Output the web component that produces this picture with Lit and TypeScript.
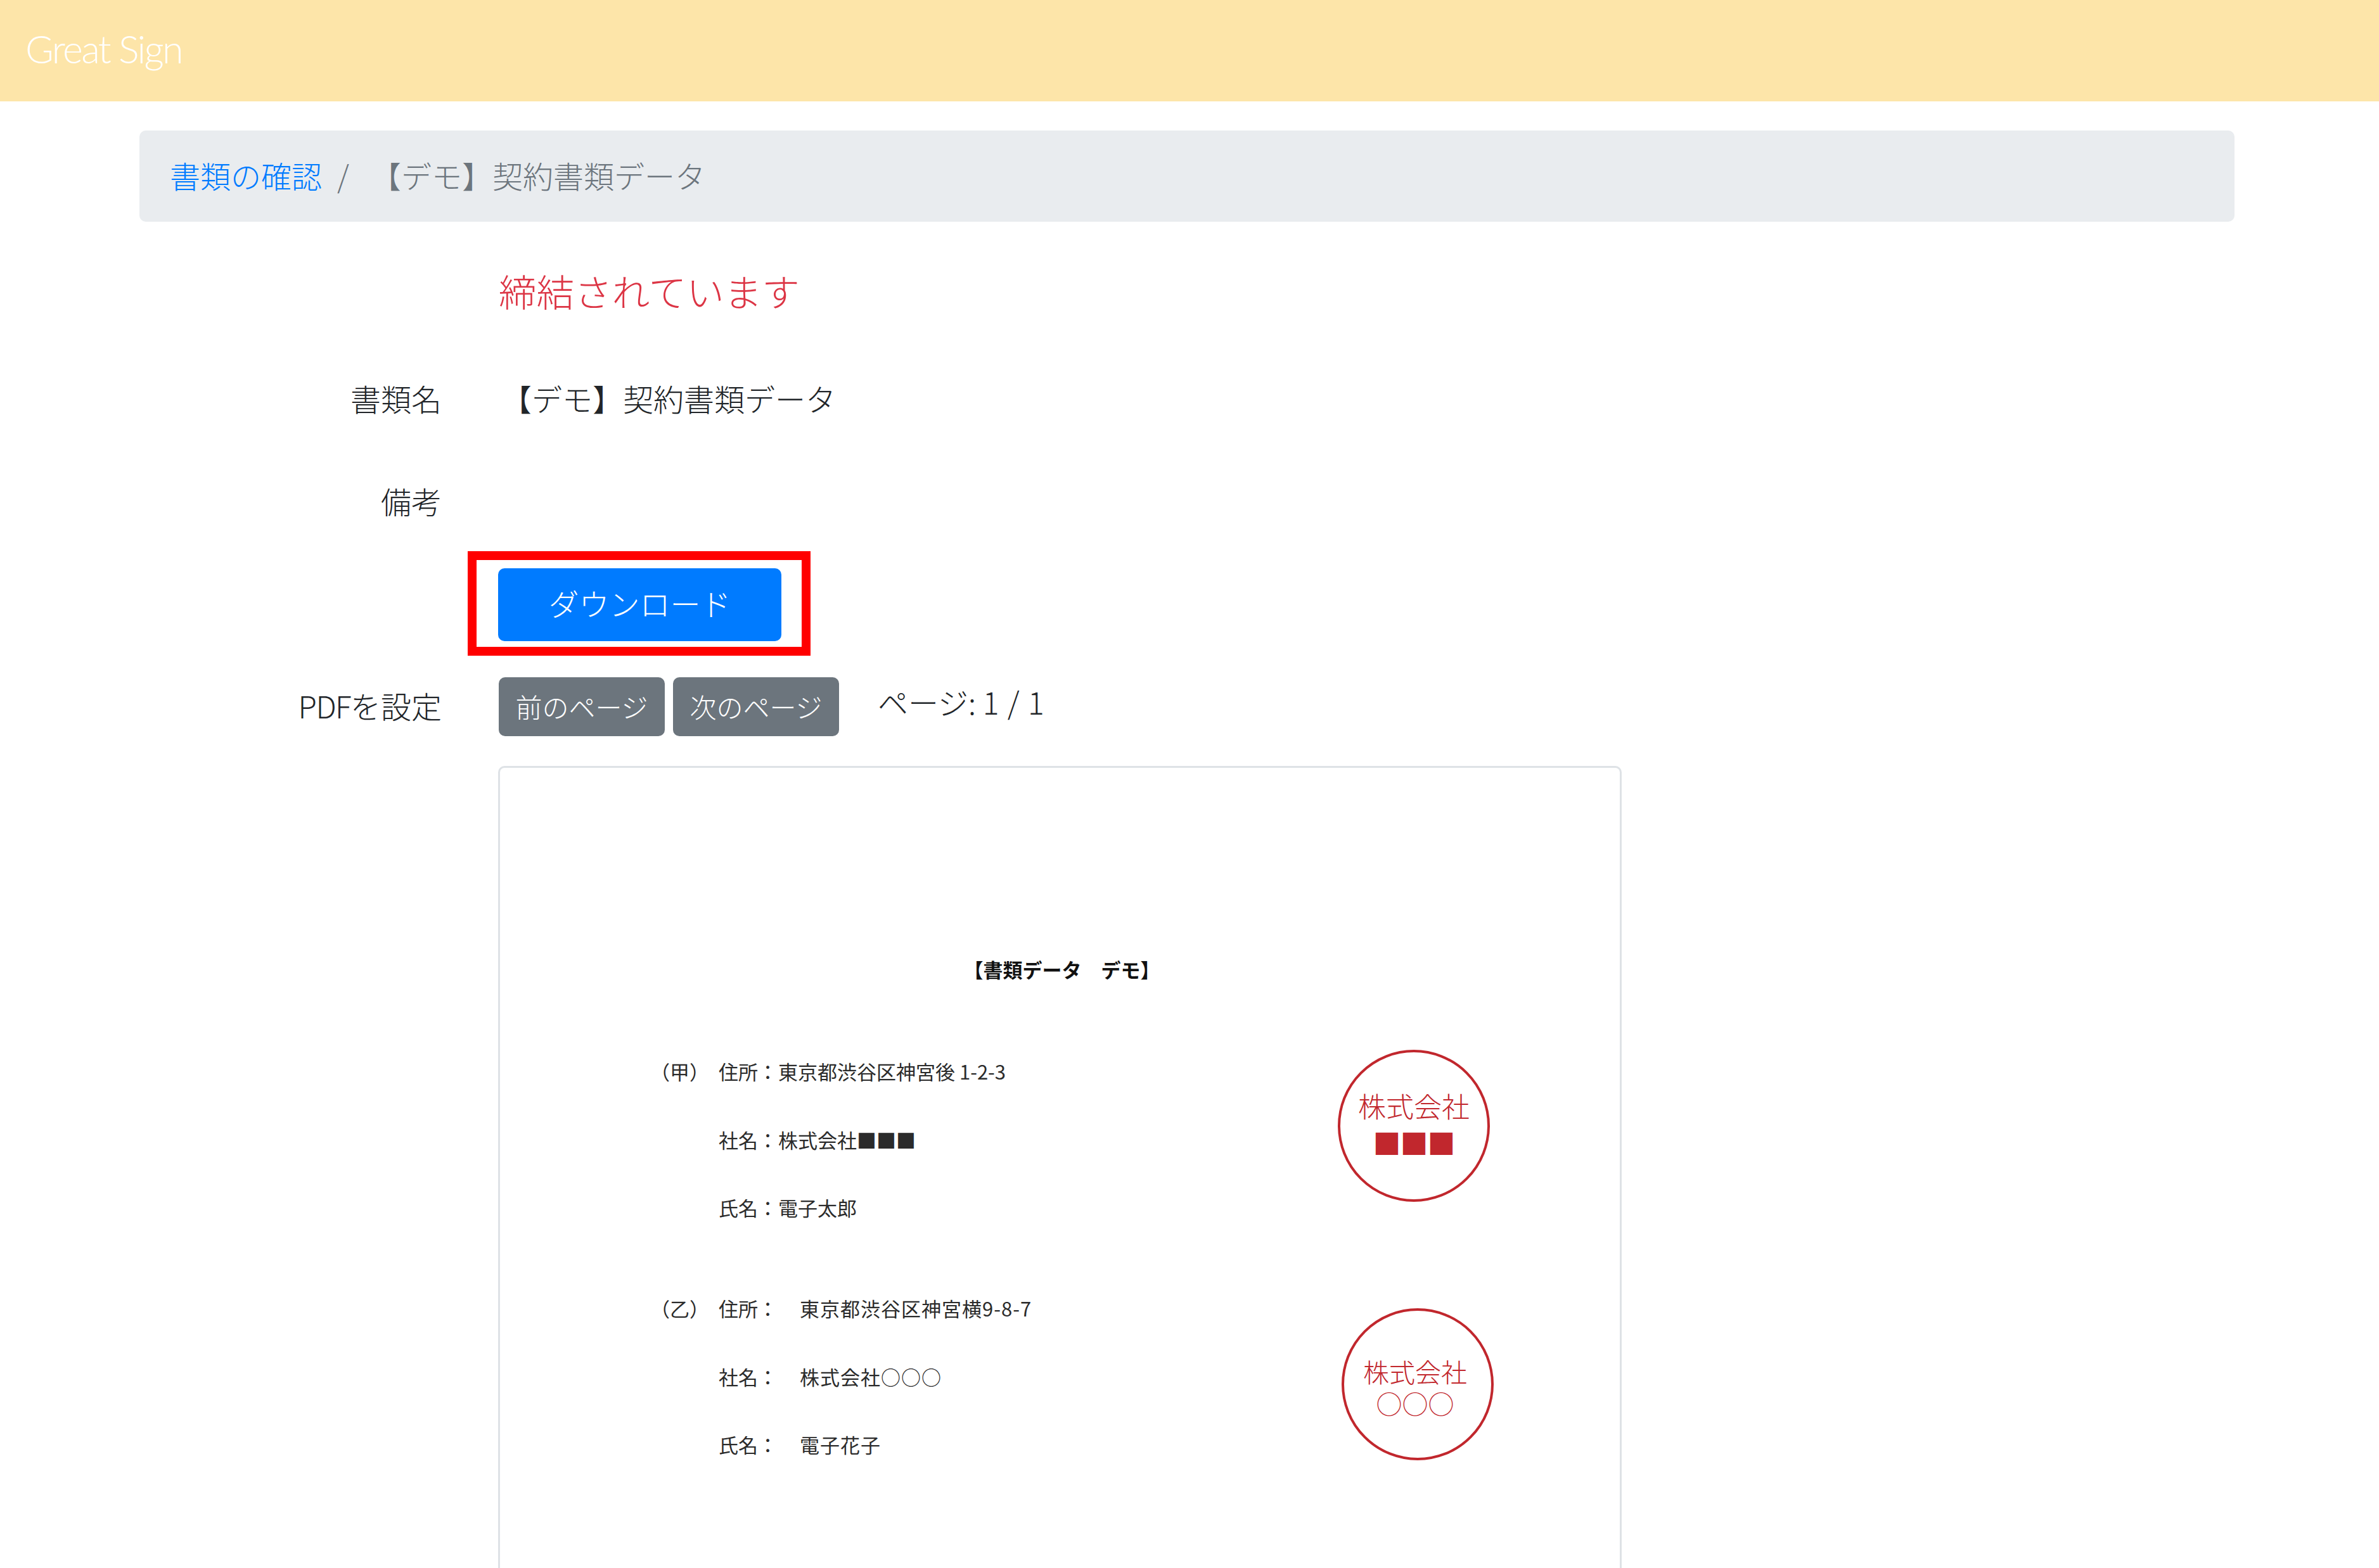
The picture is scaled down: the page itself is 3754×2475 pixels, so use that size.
import { LitElement, html, css } from "lit";
import { customElement } from "lit/decorators.js";

@customElement("app-root")
export class AppRoot extends LitElement {
  static styles = css`
    :host {
      display: block;
      height: 2475px;
      overflow: hidden;
      background: #fff;
      color: #212529;
      font-family: "Noto Sans CJK JP", "Noto Sans", sans-serif;
      font-size: 48px;
      font-weight: 300;
    }
    .head {
      height: 160px;
      background: #fde5a9;
      display: flex;
      align-items: center;
      padding: 0 0 8px 40px;
      box-sizing: border-box;
    }
    .logo {
      font-family: Lato, sans-serif;
      font-weight: 300;
      font-size: 61px;
      letter-spacing: -2.6px;
      color: #fff;
    }
    main {
      padding: 46px 228px 0 220px;
    }
    .crumb {
      height: 144px;
      box-sizing: border-box;
      background: #e9ecef;
      border-radius: 10px;
      display: flex;
      align-items: center;
      padding: 0 0 4px 48px;
      color: #6c757d;
    }
    .crumb a { color: #007bff; }
    .sep { margin: 0 34px 0 24px; }
    .row {
      display: grid;
      grid-template-columns: 477px 1fr;
      column-gap: 90px;
      align-items: center;
    }
    .lab { text-align: right; }
    .status { margin-top: 50px; height: 120px; box-sizing: border-box; padding-bottom: 5px; }
    .status .val { color: #dc3545; font-size: 59.6px; }
    .name { height: 220px; box-sizing: border-box; padding-bottom: 5px; }
    .name .val { padding-left: 4px; }
    .notes { height: 104px; box-sizing: border-box; padding-bottom: 5px; }
    .dl { margin-top: 26px; }
    .box {
      justify-self: start;
      margin-left: -49px;
      border: 14px solid #ff0000;
      padding: 13px 32px 9px 34px;
      display: flex;
    }
    .primary {
      width: 447px;
      height: 115px;
      box-sizing: border-box;
      padding-bottom: 8px;
      background: #007bff;
      color: #fff;
      border-radius: 10px;
      display: flex;
      align-items: center;
      justify-content: center;
    }
    .pdf { margin-top: 33px; height: 95px; }
    .pdf .lab { padding-bottom: 5px; }
    .latin { letter-spacing: -1.6px; }
    .tools { display: flex; align-items: center; gap: 13px; }
    .gray {
      width: 262px;
      height: 93px;
      box-sizing: border-box;
      background: #6c757d;
      color: #fff;
      border-radius: 10px;
      font-size: 42px;
      padding-bottom: 2px;
      display: flex;
      align-items: center;
      justify-content: center;
    }
    .pager {
      margin-left: 48px;
      margin-top: -18px;
    }
    .num { letter-spacing: 1.4px; }
    .doc {
      margin: 46px 0 0 566px;
      width: 1773px;
      height: 2500px;
      box-sizing: border-box;
      border: 3px solid #dee2e6;
      border-radius: 10px;
      padding: 298px 0 0 256px;
      color: #2b2b2b;
      font-size: 31px;
      font-weight: 400;
    }
    .title {
      width: 1261px;
      text-align: center;
      font-weight: 700;
      font-size: 31px;
      color: #111;
      line-height: 40px;
      margin-bottom: 121px;
    }
    .party {
      display: grid;
      grid-template-columns: 89px 94px 1fr;
      grid-auto-rows: 107.5px;
      align-items: start;
      position: relative;
      line-height: 40px;
    }
    .party + .party { margin-top: 51.5px; }
    .who { margin-left: -19px; }
    .v2 { padding-left: 34px; letter-spacing: 1px; }
    .stamp {
      position: absolute;
      width: 240px;
      height: 240px;
      box-sizing: border-box;
      border: 4px solid #c1272d;
      border-radius: 50%;
      color: #c1272d;
      font-weight: 300;
      display: flex;
      flex-direction: column;
      align-items: center;
      justify-content: center;
    }
    .s1 { left: 1066px; top: -14px; font-size: 44px; line-height: 58px; padding-bottom: 6px; }
    .s2 { left: 1072px; top: 20px; font-size: 41px; line-height: 50px; padding: 8px 8px 0 0; }
    .sq { font-size: 44px; letter-spacing: -1px; }
  `;

  render() {
    return html`
      <header class="head"><span class="logo">Great Sign</span></header>
      <main>
        <nav class="crumb">
          <a>書類の確認</a><span class="sep">/</span><span>【デモ】契約書類データ</span>
        </nav>
        <div class="row status"><span></span><span class="val">締結されています</span></div>
        <div class="row name"><span class="lab">書類名</span><span class="val">【デモ】契約書類データ</span></div>
        <div class="row notes"><span class="lab">備考</span><span></span></div>
        <div class="row dl">
          <span></span>
          <div class="box"><div class="primary">ダウンロード</div></div>
        </div>
        <div class="row pdf">
          <span class="lab"><span class="latin">PDF</span>を設定</span>
          <div class="tools">
            <div class="gray">前のページ</div>
            <div class="gray">次のページ</div>
            <span class="pager">ページ: <span class="num">1 / 1</span></span>
          </div>
        </div>
        <section class="doc">
          <div class="title">【書類データ　デモ】</div>
          <div class="party">
            <span class="who">（甲）</span><span>住所：</span><span>東京都渋谷区神宮後 1-2-3</span>
            <span></span><span>社名：</span><span>株式会社■■■</span>
            <span></span><span>氏名：</span><span>電子太郎</span>
            <div class="stamp s1"><span>株式会社</span><span class="sq">■■■</span></div>
          </div>
          <div class="party">
            <span class="who">（乙）</span><span>住所：</span><span class="v2">東京都渋谷区神宮横9-8-7</span>
            <span></span><span>社名：</span><span class="v2">株式会社○○○</span>
            <span></span><span>氏名：</span><span class="v2">電子花子</span>
            <div class="stamp s2"><span>株式会社</span><span>○○○</span></div>
          </div>
        </section>
      </main>
    `;
  }
}
